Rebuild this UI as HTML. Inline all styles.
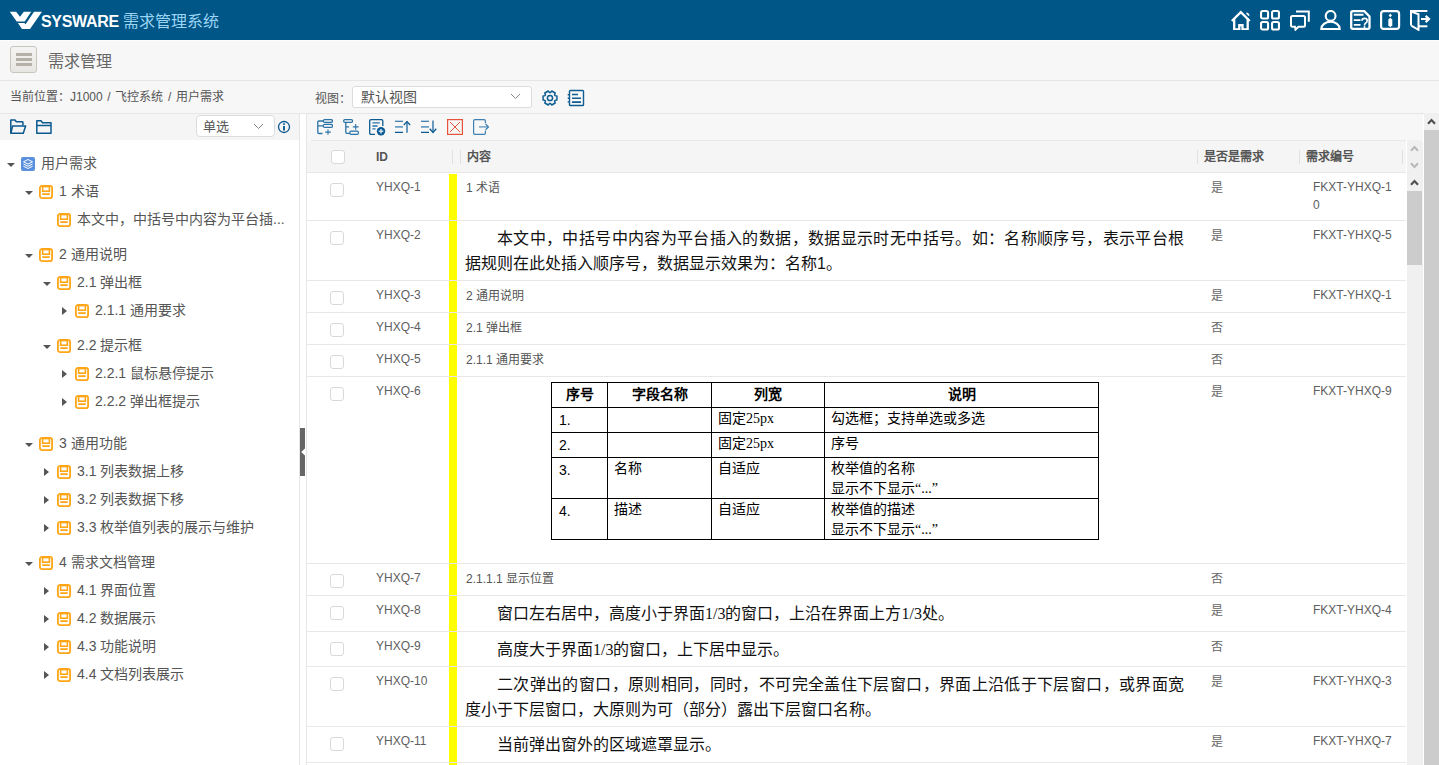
<!DOCTYPE html>
<html lang="zh-CN">
<head>
<meta charset="utf-8">
<style>
*{box-sizing:border-box;margin:0;padding:0}
html,body{width:1439px;height:765px;overflow:hidden}
body{position:relative;background:#f7f7f7;font-family:"Liberation Sans",sans-serif;color:#555;font-size:12px}
.abs{position:absolute}
#hdr{left:0;top:0;width:1439px;height:40px;background:#005686}
#hdrline{left:0;top:40px;width:1439px;height:1px;background:#fdfdfd}
#logo-txt{left:41px;top:11px;color:#fff;font-weight:bold;font-size:16px;letter-spacing:-0.3px;line-height:22px}
#sys-title{left:123px;top:11px;color:#9cd4f5;font-size:16px;line-height:22px}
.hicon{position:absolute;top:10px;width:20px;height:20px}
#titlebar-line{left:0;top:80px;width:1439px;height:1px;background:#e5e5e5}
#ham{left:10px;top:46px;width:27px;height:27px;border:1px solid #c9c6c0;border-radius:3px;background:linear-gradient(#f5f4f2,#e8e6e2)}
#ham i{position:absolute;left:5px;width:16px;height:3px;background:#b5b0a8}
#ttl{left:48px;top:51px;font-size:16px;line-height:22px;color:#666}
#crumb{left:10px;top:88px;font-size:12px;line-height:18px;color:#555;word-spacing:1.3px}
#crumb-line{left:0;top:113px;width:1439px;height:1px;background:#e6e6e6}
#view-lbl{left:315px;top:90px;font-size:12px;line-height:18px}
#view-sel{left:352px;top:86px;width:180px;height:22px;border:1px solid #dcdcdc;border-radius:3px;background:#fff}
#view-sel span{position:absolute;left:8px;top:1px;font-size:14px;line-height:19px;color:#555}
#left{left:0;top:114px;width:299px;height:651px;background:#fff}
#left-tb{left:0;top:114px;width:299px;height:26px;background:#f5f5f5}
#left-border{left:299px;top:114px;width:1px;height:651px;background:#e6e6e6}
#gap{left:300px;top:114px;width:6px;height:651px;background:#fff}
#single{left:196px;top:115px;width:79px;height:22px;border:1px solid #dcdcdc;border-radius:4px;background:#fff}
#single span{position:absolute;left:6px;top:1px;font-size:13px;line-height:19px;color:#555}
.tree{position:absolute;font-size:14px;line-height:20px;color:#555;white-space:nowrap}
.arr-d{position:absolute;width:0;height:0;border-left:4px solid transparent;border-right:4px solid transparent;border-top:4.5px solid #555}
.arr-r{position:absolute;width:0;height:0;border-top:4.5px solid transparent;border-bottom:4.5px solid transparent;border-left:5px solid #555}
.ico{position:absolute;width:14px;height:14px}
#right{left:306px;top:113px;width:1118px;height:652px;background:#fff;border-left:1px solid #e6e6e6;border-top:1px solid #e6e6e6}
#right-tb{left:307px;top:114px;width:1116px;height:26px;background:#f7f7f7}
#thead{left:307px;top:140px;width:1099px;height:33px;background:#f5f5f5;border-top:1px solid #f9f9f9;border-bottom:1px solid #e8e8e8}
#thead-top{left:311px;top:140px;width:1095px;height:1px;background:#e8e8e8}
.th{position:absolute;top:149px;font-weight:bold;font-size:12px;line-height:16px;color:#555}
.cb{position:absolute;left:330px;width:14px;height:14px;border:1px solid #d9d9d9;border-radius:3px;background:#fff}
.row{position:absolute;left:307px;width:1099px;border-bottom:1px solid #e8e8e8;background:#fff}
.yb{position:absolute;left:449px;width:8px;background:#ffff00}
.cid{position:absolute;left:376px;font-size:12px;line-height:18px;color:#5e5e5e}
.cyn{position:absolute;left:1211px;font-size:12px;line-height:18px;color:#666}
.cno{position:absolute;left:1313px;width:82px;font-size:12px;line-height:18px;color:#5e5e5e;word-break:break-all}
.csm{position:absolute;left:466px;font-size:12px;line-height:18px;color:#555}
.cbig{position:absolute;left:465px;width:719px;font-size:16px;line-height:25px;color:#111;text-align:justify;text-indent:32px}
#inner-sb{left:1407px;top:140px;width:16px;height:625px;background:#f0f0f0;border-top-right-radius:4px}
#outer-sb{left:1424px;top:113px;width:15px;height:652px;background:#f0f0f0}
#outer-thumb{left:1424px;top:130px;width:15px;height:635px;background:#cccccc}
#inner-thumb{left:1407px;top:191px;width:15px;height:74px;background:#cccccc}
#handle{left:300px;top:428px;width:5px;height:48px;background:#666}
table.doc{position:absolute;left:551px;top:382px;border-collapse:collapse;font-size:14px;line-height:20px;color:#000;table-layout:fixed}
table.doc td{border:1px solid #000;padding:0 6px;vertical-align:top;height:25px}
table.doc td.n{padding:0 6px 0 7px}
table.doc td.n span{position:relative;top:2px}
.sf{font-family:"Liberation Serif",serif;line-height:14px}
table.doc tr.h td{font-weight:bold;text-align:center;height:25px}
</style>
</head>
<body>
<div id="hdr" class="abs"></div><div id="hdrline" class="abs"></div>
<svg class="abs" style="left:8px;top:9px" width="36" height="23" viewBox="0 0 36 23"><path d="M1.8 2.86 H8.1 L12 7.8 L15.8 2.86 H23.2 L16.7 12.5 H8.7 Z" fill="#fff"/><path d="M9.9 14.1 H16.4 L17.6 15.2 L26 2.86 H34 L22 20 H14 Z" fill="#fff"/></svg>
<div id="logo-txt" class="abs">SYSWARE</div><div id="sys-title" class="abs">需求管理系统</div>
<div id="ham" class="abs"><i style="top:6px"></i><i style="top:11px"></i><i style="top:16px"></i></div>
<div id="ttl" class="abs">需求管理</div><div id="titlebar-line" class="abs"></div>
<div id="crumb" class="abs">当前位置：J1000 / 飞控系统 / 用户需求</div>
<div id="view-lbl" class="abs">视图：</div><div id="view-sel" class="abs"><span>默认视图</span></div>
<div id="crumb-line" class="abs"></div>
<div id="left" class="abs"></div><div id="left-tb" class="abs"></div><div id="left-border" class="abs"></div><div id="gap" class="abs"></div>
<div id="single" class="abs"><span>单选</span></div>
<div class="arr-d" style="left:7px;top:163px"></div>
<svg class="ico" style="left:21px;top:157px" viewBox="0 0 14 14"><rect x="0" y="0" width="14" height="14" rx="2" fill="#5a8fdb"/><path d="M7 2.5 L11.5 4.8 L7 7.1 L2.5 4.8 Z" fill="none" stroke="#fff" stroke-width="1"/><path d="M2.5 7 L7 9.3 L11.5 7 M2.5 9.2 L7 11.5 L11.5 9.2" fill="none" stroke="#fff" stroke-width="1"/></svg>
<div class="tree" style="left:41px;top:153px">用户需求</div>
<div class="arr-d" style="left:25px;top:191px"></div>
<svg class="ico" style="left:39px;top:185px" viewBox="0 0 14 14"><rect x="0.9" y="0.9" width="12.2" height="12.2" rx="2.2" fill="none" stroke="#ffa516" stroke-width="1.8"/><rect x="3.6" y="1.6" width="6.8" height="4.6" fill="none" stroke="#ffa516" stroke-width="1.6"/><rect x="3" y="8.2" width="8" height="1.7" rx="0.8" fill="#ffa516"/></svg>
<div class="tree" style="left:59px;top:181px">1 术语</div>
<svg class="ico" style="left:57px;top:213px" viewBox="0 0 14 14"><rect x="0.9" y="0.9" width="12.2" height="12.2" rx="2.2" fill="none" stroke="#ffa516" stroke-width="1.8"/><rect x="3.6" y="1.6" width="6.8" height="4.6" fill="none" stroke="#ffa516" stroke-width="1.6"/><rect x="3" y="8.2" width="8" height="1.7" rx="0.8" fill="#ffa516"/></svg>
<div class="tree" style="left:77px;top:209px">本文中，中括号中内容为平台插...</div>
<div class="arr-d" style="left:25px;top:254px"></div>
<svg class="ico" style="left:39px;top:248px" viewBox="0 0 14 14"><rect x="0.9" y="0.9" width="12.2" height="12.2" rx="2.2" fill="none" stroke="#ffa516" stroke-width="1.8"/><rect x="3.6" y="1.6" width="6.8" height="4.6" fill="none" stroke="#ffa516" stroke-width="1.6"/><rect x="3" y="8.2" width="8" height="1.7" rx="0.8" fill="#ffa516"/></svg>
<div class="tree" style="left:59px;top:244px">2 通用说明</div>
<div class="arr-d" style="left:43px;top:282px"></div>
<svg class="ico" style="left:57px;top:276px" viewBox="0 0 14 14"><rect x="0.9" y="0.9" width="12.2" height="12.2" rx="2.2" fill="none" stroke="#ffa516" stroke-width="1.8"/><rect x="3.6" y="1.6" width="6.8" height="4.6" fill="none" stroke="#ffa516" stroke-width="1.6"/><rect x="3" y="8.2" width="8" height="1.7" rx="0.8" fill="#ffa516"/></svg>
<div class="tree" style="left:77px;top:272px">2.1 弹出框</div>
<div class="arr-r" style="left:62px;top:307px"></div>
<svg class="ico" style="left:75px;top:304px" viewBox="0 0 14 14"><rect x="0.9" y="0.9" width="12.2" height="12.2" rx="2.2" fill="none" stroke="#ffa516" stroke-width="1.8"/><rect x="3.6" y="1.6" width="6.8" height="4.6" fill="none" stroke="#ffa516" stroke-width="1.6"/><rect x="3" y="8.2" width="8" height="1.7" rx="0.8" fill="#ffa516"/></svg>
<div class="tree" style="left:95px;top:300px">2.1.1 通用要求</div>
<div class="arr-d" style="left:43px;top:345px"></div>
<svg class="ico" style="left:57px;top:339px" viewBox="0 0 14 14"><rect x="0.9" y="0.9" width="12.2" height="12.2" rx="2.2" fill="none" stroke="#ffa516" stroke-width="1.8"/><rect x="3.6" y="1.6" width="6.8" height="4.6" fill="none" stroke="#ffa516" stroke-width="1.6"/><rect x="3" y="8.2" width="8" height="1.7" rx="0.8" fill="#ffa516"/></svg>
<div class="tree" style="left:77px;top:335px">2.2 提示框</div>
<div class="arr-r" style="left:62px;top:370px"></div>
<svg class="ico" style="left:75px;top:367px" viewBox="0 0 14 14"><rect x="0.9" y="0.9" width="12.2" height="12.2" rx="2.2" fill="none" stroke="#ffa516" stroke-width="1.8"/><rect x="3.6" y="1.6" width="6.8" height="4.6" fill="none" stroke="#ffa516" stroke-width="1.6"/><rect x="3" y="8.2" width="8" height="1.7" rx="0.8" fill="#ffa516"/></svg>
<div class="tree" style="left:95px;top:363px">2.2.1 鼠标悬停提示</div>
<div class="arr-r" style="left:62px;top:398px"></div>
<svg class="ico" style="left:75px;top:395px" viewBox="0 0 14 14"><rect x="0.9" y="0.9" width="12.2" height="12.2" rx="2.2" fill="none" stroke="#ffa516" stroke-width="1.8"/><rect x="3.6" y="1.6" width="6.8" height="4.6" fill="none" stroke="#ffa516" stroke-width="1.6"/><rect x="3" y="8.2" width="8" height="1.7" rx="0.8" fill="#ffa516"/></svg>
<div class="tree" style="left:95px;top:391px">2.2.2 弹出框提示</div>
<div class="arr-d" style="left:25px;top:443px"></div>
<svg class="ico" style="left:39px;top:437px" viewBox="0 0 14 14"><rect x="0.9" y="0.9" width="12.2" height="12.2" rx="2.2" fill="none" stroke="#ffa516" stroke-width="1.8"/><rect x="3.6" y="1.6" width="6.8" height="4.6" fill="none" stroke="#ffa516" stroke-width="1.6"/><rect x="3" y="8.2" width="8" height="1.7" rx="0.8" fill="#ffa516"/></svg>
<div class="tree" style="left:59px;top:433px">3 通用功能</div>
<div class="arr-r" style="left:44px;top:468px"></div>
<svg class="ico" style="left:57px;top:465px" viewBox="0 0 14 14"><rect x="0.9" y="0.9" width="12.2" height="12.2" rx="2.2" fill="none" stroke="#ffa516" stroke-width="1.8"/><rect x="3.6" y="1.6" width="6.8" height="4.6" fill="none" stroke="#ffa516" stroke-width="1.6"/><rect x="3" y="8.2" width="8" height="1.7" rx="0.8" fill="#ffa516"/></svg>
<div class="tree" style="left:77px;top:461px">3.1 列表数据上移</div>
<div class="arr-r" style="left:44px;top:496px"></div>
<svg class="ico" style="left:57px;top:493px" viewBox="0 0 14 14"><rect x="0.9" y="0.9" width="12.2" height="12.2" rx="2.2" fill="none" stroke="#ffa516" stroke-width="1.8"/><rect x="3.6" y="1.6" width="6.8" height="4.6" fill="none" stroke="#ffa516" stroke-width="1.6"/><rect x="3" y="8.2" width="8" height="1.7" rx="0.8" fill="#ffa516"/></svg>
<div class="tree" style="left:77px;top:489px">3.2 列表数据下移</div>
<div class="arr-r" style="left:44px;top:524px"></div>
<svg class="ico" style="left:57px;top:521px" viewBox="0 0 14 14"><rect x="0.9" y="0.9" width="12.2" height="12.2" rx="2.2" fill="none" stroke="#ffa516" stroke-width="1.8"/><rect x="3.6" y="1.6" width="6.8" height="4.6" fill="none" stroke="#ffa516" stroke-width="1.6"/><rect x="3" y="8.2" width="8" height="1.7" rx="0.8" fill="#ffa516"/></svg>
<div class="tree" style="left:77px;top:517px">3.3 枚举值列表的展示与维护</div>
<div class="arr-d" style="left:25px;top:562px"></div>
<svg class="ico" style="left:39px;top:556px" viewBox="0 0 14 14"><rect x="0.9" y="0.9" width="12.2" height="12.2" rx="2.2" fill="none" stroke="#ffa516" stroke-width="1.8"/><rect x="3.6" y="1.6" width="6.8" height="4.6" fill="none" stroke="#ffa516" stroke-width="1.6"/><rect x="3" y="8.2" width="8" height="1.7" rx="0.8" fill="#ffa516"/></svg>
<div class="tree" style="left:59px;top:552px">4 需求文档管理</div>
<div class="arr-r" style="left:44px;top:587px"></div>
<svg class="ico" style="left:57px;top:584px" viewBox="0 0 14 14"><rect x="0.9" y="0.9" width="12.2" height="12.2" rx="2.2" fill="none" stroke="#ffa516" stroke-width="1.8"/><rect x="3.6" y="1.6" width="6.8" height="4.6" fill="none" stroke="#ffa516" stroke-width="1.6"/><rect x="3" y="8.2" width="8" height="1.7" rx="0.8" fill="#ffa516"/></svg>
<div class="tree" style="left:77px;top:580px">4.1 界面位置</div>
<div class="arr-r" style="left:44px;top:615px"></div>
<svg class="ico" style="left:57px;top:612px" viewBox="0 0 14 14"><rect x="0.9" y="0.9" width="12.2" height="12.2" rx="2.2" fill="none" stroke="#ffa516" stroke-width="1.8"/><rect x="3.6" y="1.6" width="6.8" height="4.6" fill="none" stroke="#ffa516" stroke-width="1.6"/><rect x="3" y="8.2" width="8" height="1.7" rx="0.8" fill="#ffa516"/></svg>
<div class="tree" style="left:77px;top:608px">4.2 数据展示</div>
<div class="arr-r" style="left:44px;top:643px"></div>
<svg class="ico" style="left:57px;top:640px" viewBox="0 0 14 14"><rect x="0.9" y="0.9" width="12.2" height="12.2" rx="2.2" fill="none" stroke="#ffa516" stroke-width="1.8"/><rect x="3.6" y="1.6" width="6.8" height="4.6" fill="none" stroke="#ffa516" stroke-width="1.6"/><rect x="3" y="8.2" width="8" height="1.7" rx="0.8" fill="#ffa516"/></svg>
<div class="tree" style="left:77px;top:636px">4.3 功能说明</div>
<div class="arr-r" style="left:44px;top:671px"></div>
<svg class="ico" style="left:57px;top:668px" viewBox="0 0 14 14"><rect x="0.9" y="0.9" width="12.2" height="12.2" rx="2.2" fill="none" stroke="#ffa516" stroke-width="1.8"/><rect x="3.6" y="1.6" width="6.8" height="4.6" fill="none" stroke="#ffa516" stroke-width="1.6"/><rect x="3" y="8.2" width="8" height="1.7" rx="0.8" fill="#ffa516"/></svg>
<div class="tree" style="left:77px;top:664px">4.4 文档列表展示</div>
<div id="handle" class="abs"></div><svg class="abs" style="left:300px;top:447px" width="6" height="10" viewBox="0 0 6 10"><path d="M1.2 5 L5 1.5 V8.5 Z" fill="#fff"/></svg>
<div id="right" class="abs"></div><div id="right-tb" class="abs"></div><div id="thead" class="abs"></div><div id="thead-top" class="abs"></div>
<div class="cb" style="top:150px;left:331px"></div>
<div class="th" style="left:376px">ID</div>
<div class="th" style="left:467px">内容</div>
<div class="th" style="left:1204px">是否是需求</div>
<div class="th" style="left:1306px">需求编号</div>
<div class="abs" style="left:452px;top:150px;width:1px;height:14px;background:#e0e0e0"></div>
<div class="abs" style="left:460px;top:150px;width:1px;height:14px;background:#e0e0e0"></div>
<div class="abs" style="left:1197px;top:150px;width:1px;height:14px;background:#e0e0e0"></div>
<div class="abs" style="left:1299px;top:150px;width:1px;height:14px;background:#e0e0e0"></div>
<div class="abs" style="left:1402px;top:150px;width:1px;height:14px;background:#e0e0e0"></div>
<div class="row" style="top:173px;height:48px"></div>
<div class="yb" style="top:174px;height:46px"></div>
<div class="cb" style="top:183px"></div>
<div class="cid" style="top:178px">YHXQ-1</div>
<div class="cyn" style="top:179px">是</div>
<div class="cno" style="top:178px">FKXT-YHXQ-10</div>
<div class="csm" style="top:179px">1 术语</div>
<div class="row" style="top:221px;height:60px"></div>
<div class="yb" style="top:221px;height:59px"></div>
<div class="cb" style="top:231px"></div>
<div class="cid" style="top:226px">YHXQ-2</div>
<div class="cyn" style="top:227px">是</div>
<div class="cno" style="top:226px">FKXT-YHXQ-5</div>
<div class="cbig" style="top:226px">本文中，中括号中内容为平台插入的数据，数据显示时无中括号。如：名称顺序号，表示平台根据规则在此处插入顺序号，数据显示效果为：名称1。</div>
<div class="row" style="top:281px;height:32px"></div>
<div class="yb" style="top:281px;height:31px"></div>
<div class="cb" style="top:291px"></div>
<div class="cid" style="top:286px">YHXQ-3</div>
<div class="cyn" style="top:287px">是</div>
<div class="cno" style="top:286px">FKXT-YHXQ-1</div>
<div class="csm" style="top:287px">2 通用说明</div>
<div class="row" style="top:313px;height:32px"></div>
<div class="yb" style="top:313px;height:31px"></div>
<div class="cb" style="top:323px"></div>
<div class="cid" style="top:318px">YHXQ-4</div>
<div class="cyn" style="top:319px">否</div>
<div class="csm" style="top:319px">2.1 弹出框</div>
<div class="row" style="top:345px;height:32px"></div>
<div class="yb" style="top:345px;height:31px"></div>
<div class="cb" style="top:355px"></div>
<div class="cid" style="top:350px">YHXQ-5</div>
<div class="cyn" style="top:351px">否</div>
<div class="csm" style="top:351px">2.1.1 通用要求</div>
<div class="row" style="top:377px;height:187px"></div>
<div class="yb" style="top:377px;height:186px"></div>
<div class="cb" style="top:387px"></div>
<div class="cid" style="top:382px">YHXQ-6</div>
<div class="cyn" style="top:383px">是</div>
<div class="cno" style="top:382px">FKXT-YHXQ-9</div>
<table class="doc"><colgroup><col style="width:56px"><col style="width:104px"><col style="width:113px"><col style="width:274px"></colgroup>
<tr class="h"><td style="padding-top:1px">序号</td><td style="padding-top:1px">字段名称</td><td style="padding-top:1px">列宽</td><td style="padding-top:1px">说明</td></tr>
<tr><td class="n"><span>1.</span></td><td></td><td>固定<span class="sf">25px</span></td><td>勾选框；支持单选或多选</td></tr>
<tr><td class="n"><span>2.</span></td><td></td><td>固定<span class="sf">25px</span></td><td>序号</td></tr>
<tr><td class="n" style="height:40px"><span>3.</span></td><td>名称</td><td>自适应</td><td>枚举值的名称<br>显示不下显示<span class="sf">“...”</span></td></tr>
<tr><td class="n" style="height:40px"><span>4.</span></td><td>描述</td><td>自适应</td><td>枚举值的描述<br>显示不下显示<span class="sf">“...”</span></td></tr>
</table>
<div class="row" style="top:564px;height:32px"></div>
<div class="yb" style="top:564px;height:31px"></div>
<div class="cb" style="top:574px"></div>
<div class="cid" style="top:569px">YHXQ-7</div>
<div class="cyn" style="top:570px">否</div>
<div class="csm" style="top:570px">2.1.1.1 显示位置</div>
<div class="row" style="top:596px;height:36px"></div>
<div class="yb" style="top:596px;height:35px"></div>
<div class="cb" style="top:606px"></div>
<div class="cid" style="top:601px">YHXQ-8</div>
<div class="cyn" style="top:602px">是</div>
<div class="cno" style="top:601px">FKXT-YHXQ-4</div>
<div class="cbig" style="top:601px">窗口左右居中，高度小于界面<span class="sf">1/3</span>的窗口，上沿在界面上方<span class="sf">1/3</span>处。</div>
<div class="row" style="top:632px;height:35px"></div>
<div class="yb" style="top:632px;height:34px"></div>
<div class="cb" style="top:642px"></div>
<div class="cid" style="top:637px">YHXQ-9</div>
<div class="cyn" style="top:638px">否</div>
<div class="cbig" style="top:637px">高度大于界面<span class="sf">1/3</span>的窗口，上下居中显示。</div>
<div class="row" style="top:667px;height:60px"></div>
<div class="yb" style="top:667px;height:59px"></div>
<div class="cb" style="top:677px"></div>
<div class="cid" style="top:672px">YHXQ-10</div>
<div class="cyn" style="top:673px">是</div>
<div class="cno" style="top:672px">FKXT-YHXQ-3</div>
<div class="cbig" style="top:672px">二次弹出的窗口，原则相同，同时，不可完全盖住下层窗口，界面上沿低于下层窗口，或界面宽度小于下层窗口，大原则为可（部分）露出下层窗口名称。</div>
<div class="row" style="top:727px;height:36px"></div>
<div class="yb" style="top:727px;height:35px"></div>
<div class="cb" style="top:737px"></div>
<div class="cid" style="top:732px">YHXQ-11</div>
<div class="cyn" style="top:733px">是</div>
<div class="cno" style="top:732px">FKXT-YHXQ-7</div>
<div class="cbig" style="top:732px">当前弹出窗外的区域遮罩显示。</div>
<div class="row" style="top:763px;height:38px"></div>
<div class="yb" style="top:763px;height:37px"></div>
<svg class="abs" style="left:1231px;top:10px" width="20" height="20" viewBox="0 0 20 20" fill="none" stroke="#fff" stroke-width="2.3" stroke-linejoin="miter"><path d="M0.8 11 L9.8 2.2 L18.8 11"/><path d="M3.2 8.5 V19.5 H8.3 V15.2 H11.5 V19.5 H16.7 V8.5"/><path d="M15.4 3.4 A2.3 2.3 0 0 1 17.7 5.7" stroke-width="1.6"/></svg>
<svg class="abs" style="left:1260px;top:10px" width="20" height="21" viewBox="0 0 20 21" fill="none" stroke="#fff" stroke-width="2.1"><rect x="1.05" y="1.05" width="7" height="7.5" rx="1.6"/><rect x="12.05" y="1.05" width="6.9" height="7.5" rx="1.6"/><rect x="1.05" y="12" width="7" height="7.5" rx="1.6"/><rect x="12.05" y="12" width="6.9" height="7.5" rx="1.6"/></svg>
<svg class="abs" style="left:1290px;top:10px" width="20" height="21" viewBox="0 0 20 21" fill="none" stroke="#fff" stroke-width="2"><path d="M6 1.5 H18.8 V11.8"/><path d="M2.5 6 H13.5 Q15 6 15 7.5 V15.3 Q15 16.8 13.5 16.8 H8.5 L5.5 19.6 L5 16.8 H2.5 Q1 16.8 1 15.3 V7.5 Q1 6 2.5 6 Z"/></svg>
<svg class="abs" style="left:1320px;top:10px" width="21" height="20" viewBox="0 0 21 20" fill="none" stroke="#fff" stroke-width="2.1"><circle cx="10.6" cy="5.9" r="4.9"/><path d="M1.3 19 A9.2 7.2 0 0 1 19.7 19 Z"/></svg>
<svg class="abs" style="left:1350px;top:10px" width="21" height="20" viewBox="0 0 21 20" fill="none" stroke="#fff" stroke-width="2.3"><path d="M3 1.2 H14.3 L19.5 6.4 V17.2 Q19.5 18.8 17.9 18.8 H2.8 Q1.2 18.8 1.2 17.2 V2.8 Q1.2 1.2 3 1.2 Z"/><path d="M3.8 4.8 H13.5 M3.8 10.1 H10.5 M3.8 14.9 H10.5" stroke-width="1.9"/><path d="M12 10.8 Q12 8.4 14.6 8.4 Q17.2 8.4 17.2 10.7 Q17.2 12.3 15.5 13.2 Q14.5 13.8 14.5 15.4" stroke-width="1.7"/><circle cx="14.5" cy="17.1" r="1" fill="#fff" stroke="none"/></svg>
<svg class="abs" style="left:1380px;top:10px" width="21" height="20" viewBox="0 0 21 20" fill="none" stroke="#fff" stroke-width="2.2"><rect x="1.1" y="1.1" width="18" height="17.8" rx="2.6"/><path d="M10.3 3.6 L12 5.4 L10.3 7.2 L8.6 5.4 Z" fill="#fff" stroke="none"/><path d="M10.3 7.7 L12.3 9.6 V15.3 L10.3 17.3 L8.3 15.3 V9.6 Z" fill="#fff" stroke="none"/></svg>
<svg class="abs" style="left:1410px;top:10px" width="21" height="21" viewBox="0 0 21 21" fill="none" stroke="#fff" stroke-width="2"><path d="M17.4 1 H1 V15.6"/><path d="M1.2 1.6 L8.5 4.2 V19.8 L1.2 15.6"/><path d="M8.5 16.3 H17.4"/><path d="M11 9 H18.6 M15.6 5.9 L19 9 L15.6 12.1" stroke-width="2.2"/></svg>
<svg class="abs" style="left:541px;top:89px" width="18" height="18" viewBox="0 0 18 18" fill="none" stroke="#0f5d93" stroke-width="1.5" stroke-linejoin="round"><path d="M14.08 6.63 L15.92 7.02 L15.92 10.98 L14.08 11.37 L13.59 12.21 L14.18 14.00 L10.74 15.99 L9.49 14.58 L8.51 14.58 L7.26 15.99 L3.82 14.00 L4.41 12.21 L3.92 11.37 L2.08 10.98 L2.08 7.02 L3.92 6.63 L4.41 5.79 L3.82 4.00 L7.26 2.01 L8.51 3.42 L9.49 3.42 L10.74 2.01 L14.18 4.00 L13.59 5.79 Z"/><circle cx="9" cy="9" r="2.6"/></svg>
<svg class="abs" style="left:567px;top:89px" width="18" height="18" viewBox="0 0 18 18" fill="none" stroke="#0f5d93" stroke-width="1.4"><rect x="2.5" y="1.5" width="14" height="15" rx="0.8"/><path d="M5 5.5 H11 M5 9.3 H14 M5 13.1 H14" stroke-width="1.6"/><path d="M1.5 5 V6.4 M1.5 8.6 V10 M1.5 12.2 V13.6" stroke-width="1.6"/></svg>
<svg class="abs" style="left:510px;top:93px" width="11" height="7" viewBox="0 0 11 7" fill="none" stroke="#888" stroke-width="1"><path d="M1 1 L5.5 5.5 L10 1"/></svg>
<svg class="abs" style="left:253px;top:123px" width="11" height="7" viewBox="0 0 11 7" fill="none" stroke="#888" stroke-width="1"><path d="M1 1 L5.5 5.5 L10 1"/></svg>
<svg class="abs" style="left:10px;top:119px" width="17" height="16" viewBox="0 0 17 16" fill="none" stroke="#0a5a90" stroke-width="1.5" stroke-linejoin="round"><path d="M0.8 14.2 V1 H5 L6.3 2.8 H12.3 Q12.9 2.8 12.9 3.4 V6.6"/><path d="M0.8 14.2 L2.6 7 H15.6 L13.3 14.2 Z"/></svg>
<svg class="abs" style="left:36px;top:120px" width="16" height="15" viewBox="0 0 16 15" fill="none" stroke="#0a5a90" stroke-width="1.5" stroke-linejoin="round"><path d="M0.8 0.8 H5 L6.5 2.8 H15 V13.3 H0.8 Z"/><path d="M0.8 5.5 H15"/></svg>
<svg class="abs" style="left:277px;top:120px" width="14" height="14" viewBox="0 0 14 14" fill="none" stroke="#0a5a90" stroke-width="1.3"><circle cx="7" cy="7" r="5.5"/><path d="M7 6 V10.6" stroke-width="1.9"/><rect x="6.05" y="3.3" width="1.9" height="1.5" fill="#0a5a90" stroke="none"/></svg>
<svg class="abs" style="left:317px;top:119px" width="16" height="16" viewBox="0 0 16 16" fill="none" stroke="#2a73a6" stroke-width="1.2"><rect x="6.3" y="0.6" width="9.2" height="2.7" rx="1.35"/><rect x="6.3" y="5.4" width="9.2" height="3" rx="1.5"/><path d="M6.3 2 H2 Q0.8 2 0.8 3.2 V13.4 Q0.8 14.5 2 14.5 H5.5 M0.8 6.9 H6.3" stroke-width="1.3"/><path d="M11 10.4 V15.8 M8.2 13.1 H13.8" stroke-width="1.1"/></svg>
<svg class="abs" style="left:343px;top:119px" width="16" height="16" viewBox="0 0 16 16" fill="none" stroke="#2a73a6" stroke-width="1.2"><rect x="0.6" y="0.6" width="9" height="2.7" rx="1.35"/><path d="M2.8 3.3 V13.3 Q2.8 14.3 3.8 14.3 H6.8 M2.8 7.8 H6" stroke-width="1.3"/><path d="M12.7 5 V10.8 M9.8 7.9 H15.6" stroke-width="1.1"/><rect x="6.8" y="12.2" width="8.6" height="3.1" rx="1.3"/></svg>
<svg class="abs" style="left:369px;top:119px" width="17" height="17" viewBox="0 0 17 17" fill="none" stroke="#0c5a92" stroke-width="1.3"><path d="M6 15.4 H2 Q0.7 15.4 0.7 14.1 V2 Q0.7 0.7 2 0.7 H12.5 Q13.8 0.7 13.8 2 V7"/><path d="M3.4 3.9 H10.8 M3.4 7 H8.6 M3.4 9.9 H6.6" stroke-width="1.4" stroke="#2a73a6"/><circle cx="12" cy="12.2" r="4.2" fill="#0c5a92" stroke="none"/><path d="M12 9.9 V14.5 M9.7 12.2 H14.3" stroke="#cfe0ee" stroke-width="1.5"/></svg>
<svg class="abs" style="left:395px;top:119px" width="17" height="16" viewBox="0 0 17 16" fill="none" stroke="#0c5a92" stroke-width="1.1"><path d="M0 2.2 H8 M0 13.4 H8"/><path d="M0 7.9 H8" stroke="#5e95bd" stroke-width="1.6"/><path d="M12 2.6 V13.8" stroke="#2a73a6" stroke-width="1.4"/><path d="M8.8 6 L12 2.6 L15.2 6" stroke-width="1.3"/></svg>
<svg class="abs" style="left:421px;top:119px" width="17" height="16" viewBox="0 0 17 16" fill="none" stroke="#0c5a92" stroke-width="1.1"><path d="M0 2.2 H8 M0 13.4 H8"/><path d="M0 7.9 H8" stroke="#5e95bd" stroke-width="1.6"/><path d="M12 1.5 V13.2" stroke="#2a73a6" stroke-width="1.4"/><path d="M8.8 9.8 L12 13.4 L15.2 9.8" stroke-width="1.3"/></svg>
<svg class="abs" style="left:447px;top:119px" width="16" height="16" viewBox="0 0 16 16" fill="none" stroke="#e8533c" stroke-width="1.2"><rect x="0.6" y="0.6" width="14.8" height="14.8"/><path d="M3 3 L13 13 M13 3 L3 13" stroke-width="1"/></svg>
<svg class="abs" style="left:473px;top:119px" width="17" height="16" viewBox="0 0 17 16" fill="none" stroke="#3f80b0" stroke-width="1.2"><path d="M12.4 4.3 V2 Q12.4 0.6 11 0.6 H2 Q0.6 0.6 0.6 2 V14 Q0.6 15.4 2 15.4 H11 Q12.4 15.4 12.4 14 V11.6"/><path d="M6 7.9 H15.2" stroke-width="1.4" stroke="#6a9cc4"/><path d="M12.6 5 L15.4 7.9 L12.6 10.8" stroke-width="1.3"/></svg>
<div id="inner-sb" class="abs"></div><div id="inner-thumb" class="abs"></div>
<div id="outer-sb" class="abs"></div><div id="outer-thumb" class="abs"></div>
<svg class="abs" style="left:1427px;top:118px" width="9" height="7" viewBox="0 0 9 7" fill="none" stroke="#505050" stroke-width="2.2"><path d="M1 5.8 L4.5 2 L8 5.8"/></svg>
<svg class="abs" style="left:1410px;top:145px" width="9" height="7" viewBox="0 0 9 7" fill="none" stroke="#b8b8b8" stroke-width="2"><path d="M1 5.8 L4.5 2 L8 5.8"/></svg>
<svg class="abs" style="left:1410px;top:162px" width="9" height="7" viewBox="0 0 9 7" fill="none" stroke="#b8b8b8" stroke-width="2"><path d="M1 1.2 L4.5 5 L8 1.2"/></svg>
<svg class="abs" style="left:1410px;top:179px" width="9" height="7" viewBox="0 0 9 7" fill="none" stroke="#505050" stroke-width="2.2"><path d="M1 5.8 L4.5 2 L8 5.8"/></svg>
</body>
</html>
